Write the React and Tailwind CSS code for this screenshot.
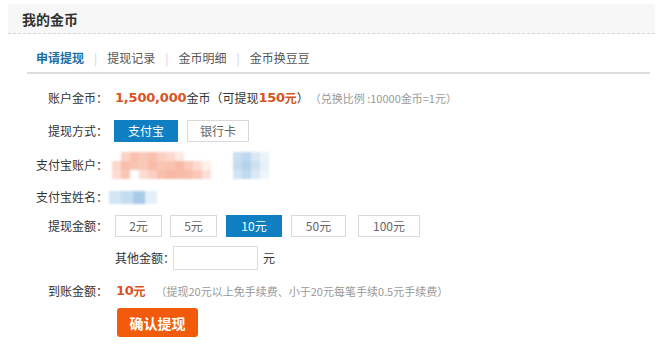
import React from "react";

const cjk = "font-['Noto_Sans_CJK_SC','Microsoft_YaHei',sans-serif]";

function Label({ children }) {
  return (
    <div className="w-[108px] shrink-0 text-right text-[12px] leading-[16px] text-[#333]">
      {children}
    </div>
  );
}

function OptBtn({ children, active, w }) {
  return (
    <div
      className={
        "h-[22px] flex items-center justify-center text-[12px] leading-[16px] border " +
        (active
          ? "bg-[#0f7fc2] border-[#0f7fc2] text-white"
          : "bg-white border-[#d9d9d9] text-[#666]")
      }
      style={{ width: w }}
    >
      {children}
    </div>
  );
}

const pink = [
  ["#fff", "#fbd3c6", "#f9c2b0", "#fac8b8", "#f9c0ae", "#fbd0c2", "#fcd9ce", "#fde9e3", "#fff", "#fff", "#fff", "#fff"],
  ["#fcd6ca", "#f9bfad", "#f9c4b3", "#fac8b8", "#f8bca9", "#f9c5b5", "#f9c2b0", "#f8baa7", "#facbbd", "#fcdcd2", "#fef1ec", "#fff"],
  ["#fddbd1", "#fac6b6", "#fff", "#fcdcd2", "#fbd0c3", "#f9bfad", "#f8b8a4", "#f8bca9", "#f8bfad", "#fac8b9", "#fce0d7", "#fff"],
];
const blue = [
  ["#cbe0f1", "#bfd8ee", "#d8e8f5", "#eaf3fa"],
  ["#c4dcef", "#b6d2eb", "#cde1f2", "#e6f0f9"],
  ["#d2e4f3", "#c1d9ee", "#dce9f6", "#eef5fb"],
];

function Mosaic({ rows, cell }) {
  return (
    <div className="flex flex-col blur-[1px]">
      {rows.map((r, i) => (
        <div key={i} className="flex">
          {r.map((c, j) => (
            <div key={j} style={{ width: cell, height: cell, background: c }} />
          ))}
        </div>
      ))}
    </div>
  );
}

export default function App() {
  return (
    <div className={"w-[660px] h-[357px] bg-white overflow-hidden " + cjk}>
      {/* header */}
      <div className="ml-[8px] mt-[4px] w-[647px] h-[30px] bg-[#f7f7f7] border-b border-dashed border-[#d6d6d6] pl-[14px] flex items-center">
        <span className="text-[14px] leading-[18px] font-bold text-[#333]">我的金币</span>
      </div>

      {/* tabs */}
      <div className="ml-[27px] w-[623px] h-[40px] border-b-2 border-[#dcdcdc] flex items-start pt-[16px] pl-[9px] text-[12px] leading-[16px]">
        <span className="font-bold text-[#1a6ea5]">申请提现</span>
        <span className="mx-[10px] text-[#d4d4d4]">|</span>
        <span className="text-[#555]">提现记录</span>
        <span className="mx-[10px] text-[#d4d4d4]">|</span>
        <span className="text-[#555]">金币明细</span>
        <span className="mx-[10px] text-[#d4d4d4]">|</span>
        <span className="text-[#555]">金币换豆豆</span>
      </div>

      {/* row 1 */}
      <div className="mt-[12px] h-[24px] flex items-center">
        <Label>账户金币：</Label>
        <div className="ml-[7px] flex items-center text-[12px] leading-[16px] text-[#333]">
          <span className="font-['DejaVu_Sans',sans-serif] font-bold text-[13px] text-[#d9541f] tracking-[-0.2px]">1,500,000</span>
          <span>金币（可提现</span>
          <span className="font-['DejaVu_Sans',sans-serif] font-bold text-[13px] text-[#d9541f] tracking-[-0.3px]">150</span>
          <span className="font-bold text-[#d9541f]">元</span>
          <span>）</span>
          <span className="ml-[1px] text-[11px] text-[#999]">（兑换比例 :10000金币=1元）</span>
        </div>
      </div>

      {/* row 2 */}
      <div className="mt-[10px] h-[22px] flex items-center">
        <Label>提现方式：</Label>
        <div className="ml-[6px] flex items-center gap-[9px]">
          <OptBtn active w={64}>支付宝</OptBtn>
          <OptBtn w={62}>银行卡</OptBtn>
        </div>
      </div>

      {/* row 3 */}
      <div className="mt-[9px] h-[28px] flex items-center">
        <Label>支付宝账户：</Label>
        <div className="ml-[4px] flex items-center">
          <Mosaic rows={pink} cell={9} />
          <div className="ml-[13px]">
            <Mosaic rows={blue} cell={9} />
          </div>
        </div>
      </div>

      {/* row 4 */}
      <div className="mt-[8px] h-[20px] flex items-center">
        <Label>支付宝姓名：</Label>
        <div className="ml-[1px] flex blur-[0.8px]">
          <div className="w-[12px] h-[13px] bg-[#d3e5f3]" />
          <div className="w-[12px] h-[13px] bg-[#c4dcef]" />
          <div className="w-[12px] h-[13px] bg-[#a8cbe8]" />
          <div className="w-[12px] h-[13px] bg-[#e4eff8]" />
        </div>
      </div>

      {/* row 5 */}
      <div className="mt-[8px] h-[22px] flex items-center">
        <Label>提现金额：</Label>
        <div className="ml-[7px] flex items-center">
          <OptBtn w={47}>2元</OptBtn>
          <div className="ml-[8px]"><OptBtn w={47}>5元</OptBtn></div>
          <div className="ml-[9px]"><OptBtn active w={56}>10元</OptBtn></div>
          <div className="ml-[9px]"><OptBtn w={55}>50元</OptBtn></div>
          <div className="ml-[12px]"><OptBtn w={62}>100元</OptBtn></div>
        </div>
      </div>

      {/* row 6 */}
      <div className="mt-[9px] h-[24px] flex items-center pl-[115px] text-[12px] leading-[16px] text-[#333]">
        <span>其他金额：</span>
        <div className="ml-[-2px] w-[85px] h-[24px] border border-[#dcdcdc] bg-white" />
        <span className="ml-[5px]">元</span>
      </div>

      {/* row 7 */}
      <div className="mt-[11px] h-[20px] flex items-center">
        <Label>到账金额：</Label>
        <div className="ml-[8px] flex items-center text-[12px] leading-[16px]">
          <span className="font-['DejaVu_Sans',sans-serif] font-bold text-[13px] text-[#d9541f] tracking-[-0.3px]">10</span>
          <span className="font-bold text-[#d9541f]">元</span>
          <span className="ml-[10px] text-[11px] text-[#999]">（提现20元以上免手续费、小于20元每笔手续0.5元手续费）</span>
        </div>
      </div>

      {/* submit */}
      <div className="mt-[7px] pl-[117px]">
        <div className="w-[81px] h-[29px] rounded-[3px] bg-[#f35b0c] flex items-center justify-center text-white text-[14px] leading-[18px] font-bold">
          确认提现
        </div>
      </div>
    </div>
  );
}
